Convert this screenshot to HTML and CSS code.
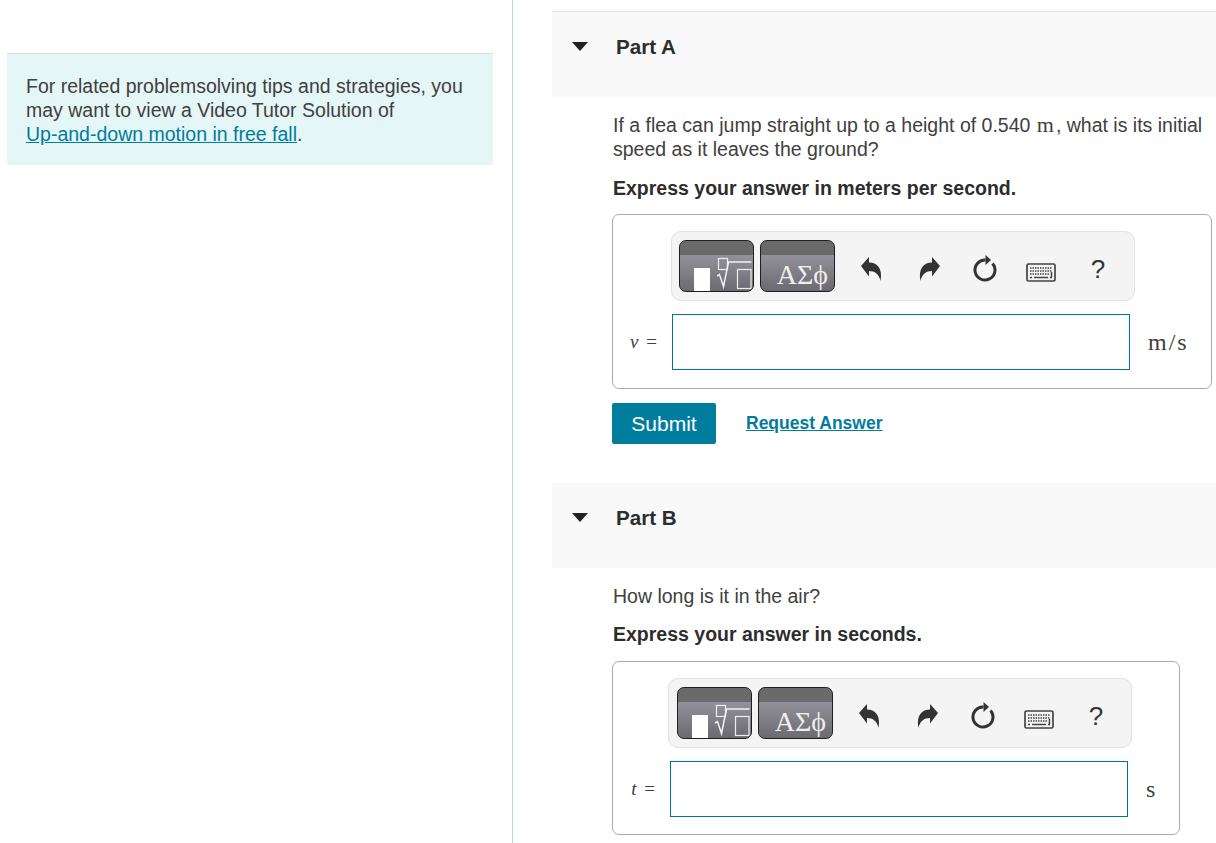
FILE: index.html
```html
<!DOCTYPE html>
<html lang="en">
<head>
<meta charset="utf-8">
<title>Part A and Part B</title>
<link rel="stylesheet" href="styles.css">
</head>
<body>
<svg class="defs" width="0" height="0" aria-hidden="true">
  <symbol id="i-palette" viewBox="0 0 73 50">
    <rect x="14" y="27" width="16" height="23" fill="#fff"/>
    <rect x="38.500" y="17.500" width="9" height="11" fill="none" stroke="#eee" stroke-width="1.200"/>
    <path d="M37 35l2.500-1.500 4 12 5-24.500h23" fill="none" stroke="#f2f2f2" stroke-width="1.500"/>
    <rect x="57.500" y="28.500" width="13.500" height="19" fill="none" stroke="#eee" stroke-width="1.200"/>
  </symbol>
  <symbol id="i-undo" viewBox="0 0 24 28">
    <path d="M2 11 10 2v5.500C18 7.500 24 13 21.500 26 20 19 16 16 10 16v5.500z" fill="#333"/>
  </symbol>
  <symbol id="i-redo" viewBox="0 0 24 28">
    <path d="M22 11 14 2v5.500C6 7.500 0 13 2.500 26 4 19 8 16 14 16v5.500z" fill="#333"/>
  </symbol>
  <symbol id="i-refresh" viewBox="0 0 28 30">
    <path d="M14.500 6A10 10 0 1 0 21.500 9.400" fill="none" stroke="#333" stroke-width="3"/>
    <path d="M14.500 1l5.500 5-5.500 5z" fill="#333"/>
  </symbol>
  <symbol id="i-keyboard" viewBox="0 0 30 19">
    <rect x="1" y="1" width="28" height="17" rx="1.500" fill="none" stroke="#444" stroke-width="1.700"/>
    <path d="M4 5h22M4 8h22M4 11h20" fill="none" stroke="#444" stroke-width="1.600" stroke-dasharray="1.500 1"/>
    <path d="M4 14.500h2M8 14.500h14M24 14.500h2M25.500 9v5" fill="none" stroke="#444" stroke-width="1.500"/>
  </symbol>
</svg>

<aside class="sidebar">
  <div class="tip">
    For related problemsolving tips and strategies, you may want to view a Video Tutor Solution of<br>
    <a class="tip-link" href="#">Up-and-down motion in free fall</a>.
  </div>
</aside>

<main class="parts">
  <section class="part part-a">
    <header class="part-head">
      <span class="caret"></span>
      <h2 class="part-title">Part A</h2>
    </header>
    <div class="part-body">
      <p class="question">If a flea can jump straight up to a height of 0.540 <span class="math-roman">m</span>, what is its initial speed as it leaves the ground?</p>
      <p class="instruction">Express your answer in meters per second.</p>
      <div class="answer answer-a">
        <div class="toolbar">
          <button class="tpl" type="button"><svg class="tpl-icon"><use href="#i-palette"/></svg></button>
          <button class="tpl" type="button"><span class="tpl-greek">ΑΣϕ</span></button>
          <div class="tools">
            <span class="tool"><svg class="ic-arrow"><use href="#i-undo"/></svg></span>
            <span class="tool"><svg class="ic-arrow"><use href="#i-redo"/></svg></span>
            <span class="tool"><svg class="ic-refresh"><use href="#i-refresh"/></svg></span>
            <span class="tool"><svg class="ic-kbd"><use href="#i-keyboard"/></svg></span>
            <span class="tool tool-help">?</span>
          </div>
        </div>
        <div class="entry">
          <span class="var"><i>v</i> =</span>
          <input class="field" type="text" aria-label="v">
          <span class="unit">m/s</span>
        </div>
      </div>
      <div class="actions">
        <button class="submit" type="button">Submit</button>
        <a class="request" href="#">Request Answer</a>
      </div>
    </div>
  </section>

  <section class="part part-b">
    <header class="part-head">
      <span class="caret"></span>
      <h2 class="part-title">Part B</h2>
    </header>
    <div class="part-body">
      <p class="question">How long is it in the air?</p>
      <p class="instruction">Express your answer in seconds.</p>
      <div class="answer answer-b">
        <div class="toolbar">
          <button class="tpl" type="button"><svg class="tpl-icon"><use href="#i-palette"/></svg></button>
          <button class="tpl" type="button"><span class="tpl-greek">ΑΣϕ</span></button>
          <div class="tools">
            <span class="tool"><svg class="ic-arrow"><use href="#i-undo"/></svg></span>
            <span class="tool"><svg class="ic-arrow"><use href="#i-redo"/></svg></span>
            <span class="tool"><svg class="ic-refresh"><use href="#i-refresh"/></svg></span>
            <span class="tool"><svg class="ic-kbd"><use href="#i-keyboard"/></svg></span>
            <span class="tool tool-help">?</span>
          </div>
        </div>
        <div class="entry">
          <span class="var"><i>t</i> =</span>
          <input class="field" type="text" aria-label="t">
          <span class="unit">s</span>
        </div>
      </div>
    </div>
  </section>
</main>
</body>
</html>
```

FILE: styles.css
```css
* { box-sizing: border-box; }

html, body {
  height: 100%;
  overflow: hidden;
}

body {
  margin: 0;
  display: flex;
  background: #fff;
  color: #404040;
  font-family: "Liberation Sans", Arial, sans-serif;
  font-size: 19.5px;
  line-height: 24px;
}

.defs { position: absolute; }

.sidebar {
  flex: 0 0 513px;
  height: 843px;
  padding: 53px 19px 0 7px;
  border-right: 1px solid #b9cfe2;
}

.tip {
  height: 112px;
  padding: 20px 19px 0;
  background: #e5f6f6;
  border-top: 1px solid #d3e0e4;
}

.tip-link { color: #007c9e; }

.parts {
  flex: 1;
  min-width: 0;
  padding: 11px 0 0 39px;
}

.part-head {
  display: flex;
  align-items: flex-start;
  height: 86px;
  padding: 23px 0 0 20px;
  background: #f9f9f9;
}

.part-a .part-head { border-top: 1px solid #e2e2e2; }
.part-b .part-head { height: 85px; }

.caret {
  width: 0;
  height: 0;
  margin-top: 7px;
  border-left: 8px solid transparent;
  border-right: 8px solid transparent;
  border-top: 9px solid #222;
}

.part-title {
  margin: 0 0 0 28px;
  font-size: 20.6px;
  font-weight: 700;
  line-height: 24px;
  color: #2d2d2d;
}

.part-body { padding: 16px 0 0 60px; }

.question, .instruction { margin: 0 0 0 1px; }
.question { width: 600px; }

.instruction {
  margin-top: 15px;
  font-weight: 700;
  color: #2d2d2d;
}

.part-b .instruction { margin-top: 14px; }

.math-roman {
  font-family: "Liberation Serif", serif;
  font-size: 22px;
  letter-spacing: 2px;
  margin-left: 1px;
}

.answer {
  margin-top: 14px;
  padding-top: 16px;
  height: 175px;
  border: 1px solid #aaa;
  border-radius: 7px;
  background: #fff;
}

.answer-a { width: 600px; }
.answer-b { width: 568px; height: 174px; margin-top: 15px; }

.answer-a .toolbar { margin-left: 58px; }
.answer-b .toolbar { margin-left: 55px; padding-left: 8px; }

.toolbar {
  display: flex;
  align-items: flex-start;
  gap: 6px;
  width: 464px;
  height: 70px;
  padding: 8px 0 0 7px;
  background: #f4f4f4;
  border: 1px solid #e2e2e2;
  border-radius: 10px;
}

.tpl {
  flex: 0 0 75px;
  height: 52px;
  margin: 0;
  padding: 0;
  display: flex;
  align-items: flex-end;
  justify-content: flex-end;
  overflow: hidden;
  border: 1px solid #1f1f1f;
  border-radius: 7px;
  background: linear-gradient(#6a6a6a 0 14px, #93919b 14px, #6b6a70 100%);
}

.tpl-icon {
  display: block;
  width: 73px;
  height: 50px;
}

.tpl-greek {
  margin: 0 6px 0 0;
  font-family: "Liberation Serif", serif;
  font-size: 28px;
  line-height: 33px;
  color: #eee;
}

.tools {
  display: grid;
  grid-template-columns: 58px 60px 50px 62px 52px;
  height: 52px;
  padding-left: 1px;
}

.tool {
  display: flex;
  align-items: center;
  justify-content: center;
  padding-top: 5px;
}

.tool-help {
  padding-top: 7px;
  font-size: 26px;
  color: #333;
  line-height: 45px;
}

.ic-arrow { width: 24px; height: 28px; }
.ic-refresh { width: 28px; height: 30px; }
.ic-kbd { width: 30px; height: 19px; margin-top: 7px; }

.entry {
  display: flex;
  align-items: center;
  height: 56px;
  margin-top: 13px;
}

.var {
  flex: none;
  text-align: right;
  padding-right: 15px;
  font-family: "Liberation Serif", serif;
  font-size: 19px;
  word-spacing: 3px;
}

.answer-a .var { width: 59px; }
.answer-b .var { width: 57px; }

.field {
  flex: 0 0 458px;
  height: 56px;
  margin: 0;
  padding: 0 8px;
  border: 1px solid #00759a;
  border-radius: 0;
  background: #fff;
  outline: none;
}

.unit {
  margin-left: 18px;
  font-family: "Liberation Serif", serif;
  font-size: 24px;
  letter-spacing: 2px;
}

.actions {
  display: flex;
  align-items: center;
  margin-top: 14px;
  height: 41px;
}

.submit {
  width: 104px;
  height: 41px;
  margin: 0;
  padding: 0;
  border: 0;
  border-radius: 2px;
  background: #007c9e;
  color: #fff;
  font-family: "Liberation Sans", Arial, sans-serif;
  font-size: 21px;
}

.request {
  margin-left: 30px;
  margin-top: -2px;
  color: #007c9e;
  font-size: 17.5px;
  font-weight: 700;
}

.part-b { margin-top: 39px; }
```
